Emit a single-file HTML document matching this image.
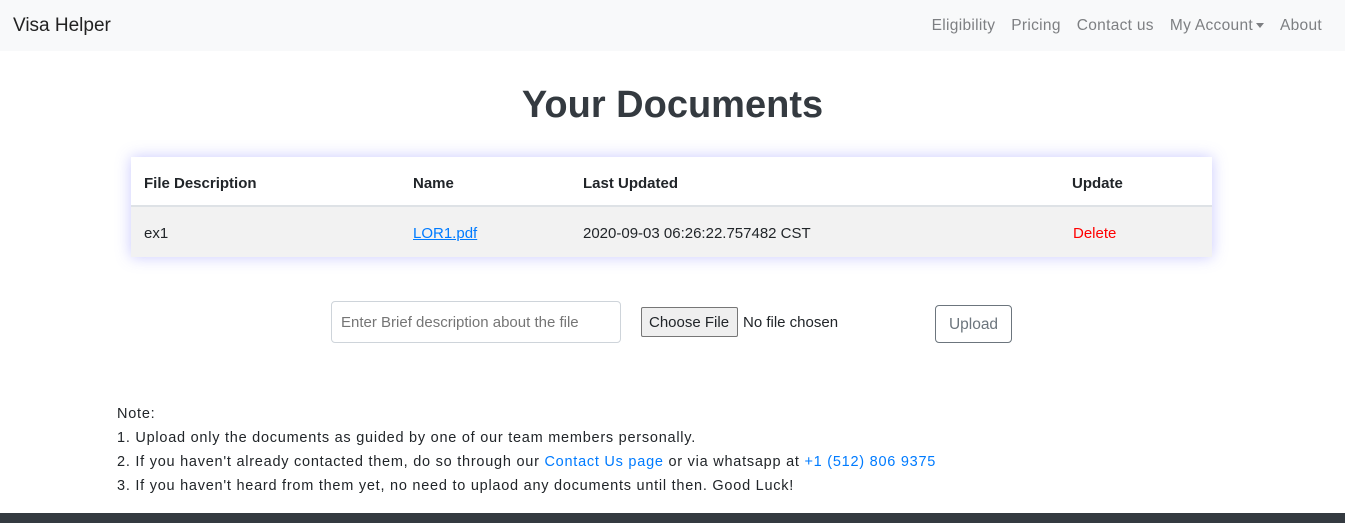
<!DOCTYPE html>
<html><head><style>
*{box-sizing:border-box;margin:0;padding:0}
body{width:1345px;height:523px;overflow:hidden;font-family:"Liberation Sans",sans-serif;color:#212529;background:#fff;position:relative;font-size:15px}
.nav{height:51px;background:#f8f9fa;position:relative}
.brand{position:absolute;left:13px;top:15px;font-size:19px;color:#222}
.links{position:absolute;right:23px;top:17px;font-size:15.5px;color:#7d7f82;letter-spacing:.3px}
.links span{margin-left:16px}
.caret{display:inline-block;width:0;height:0;border-left:4px solid transparent;border-right:4px solid transparent;border-top:5px solid #7d7f82;vertical-align:middle;margin-left:3px}
h1{position:absolute;top:84px;width:100%;text-align:center;font-size:38px;font-weight:bold;color:#343a40}
.card{position:absolute;left:131px;top:157px;width:1081px;height:100px;box-shadow:0 0 14px rgba(100,100,255,.35)}
.hd{height:50px;border-bottom:2px solid #dee2e6;position:relative;font-weight:bold;background:#fff}
.row{height:50px;background:#f2f2f2;position:relative}
.c{position:absolute;top:18px}
.row .c{top:18px}
a{color:#007bff}
input.t{position:absolute;left:331px;top:301px;width:290px;height:42px;border:1px solid #ced4da;border-radius:4px;padding-left:9px;font-size:15px;font-family:inherit;color:#6c757d}
.cf{position:absolute;left:641px;top:307px;width:97px;height:30px;background:#efefef;border:1px solid #767676;border-radius:2px;font-size:15px;padding:6px 0 0 7px}
.nf{position:absolute;left:743px;top:314px;font-size:15px}
.up{position:absolute;left:935px;top:305px;width:77px;height:38px;border:1px solid #6c757d;border-radius:4px;color:#6c757d;text-align:center;padding-top:10px;font-size:15.5px}
.note{position:absolute;left:117px;top:402px;font-size:14.5px;line-height:24px;letter-spacing:.75px}
.foot{position:absolute;left:0;top:513px;width:100%;height:10px;background:#343a40}
</style></head><body>
<div class="nav"><div class="brand">Visa Helper</div>
<div class="links"><span>Eligibility</span><span>Pricing</span><span>Contact us</span><span>My Account<i class="caret"></i></span><span>About</span></div></div>
<h1>Your Documents</h1>
<div class="card">
<div class="hd"><div class="c" style="left:13px">File Description</div><div class="c" style="left:282px">Name</div><div class="c" style="left:452px">Last Updated</div><div class="c" style="left:941px">Update</div></div>
<div class="row"><div class="c" style="left:13px">ex1</div><div class="c" style="left:282px"><a href="#">LOR1.pdf</a></div><div class="c" style="left:452px">2020-09-03 06:26:22.757482 CST</div><div class="c" style="left:942px;color:#f00">Delete</div></div>
</div>
<input class="t" placeholder="Enter Brief description about the file">
<div class="cf">Choose File</div><div class="nf">No file chosen</div>
<div class="up">Upload</div>
<div class="note">Note:<br>1. Upload only the documents as guided by one of our team members personally.<br>2. If you haven't already contacted them, do so through our <a style="text-decoration:none">Contact Us page</a> or via whatsapp at <a style="text-decoration:none">+1 (512) 806 9375</a><br>3. If you haven't heard from them yet, no need to uplaod any documents until then. Good Luck!</div>
<div class="foot"></div>
</body></html>
